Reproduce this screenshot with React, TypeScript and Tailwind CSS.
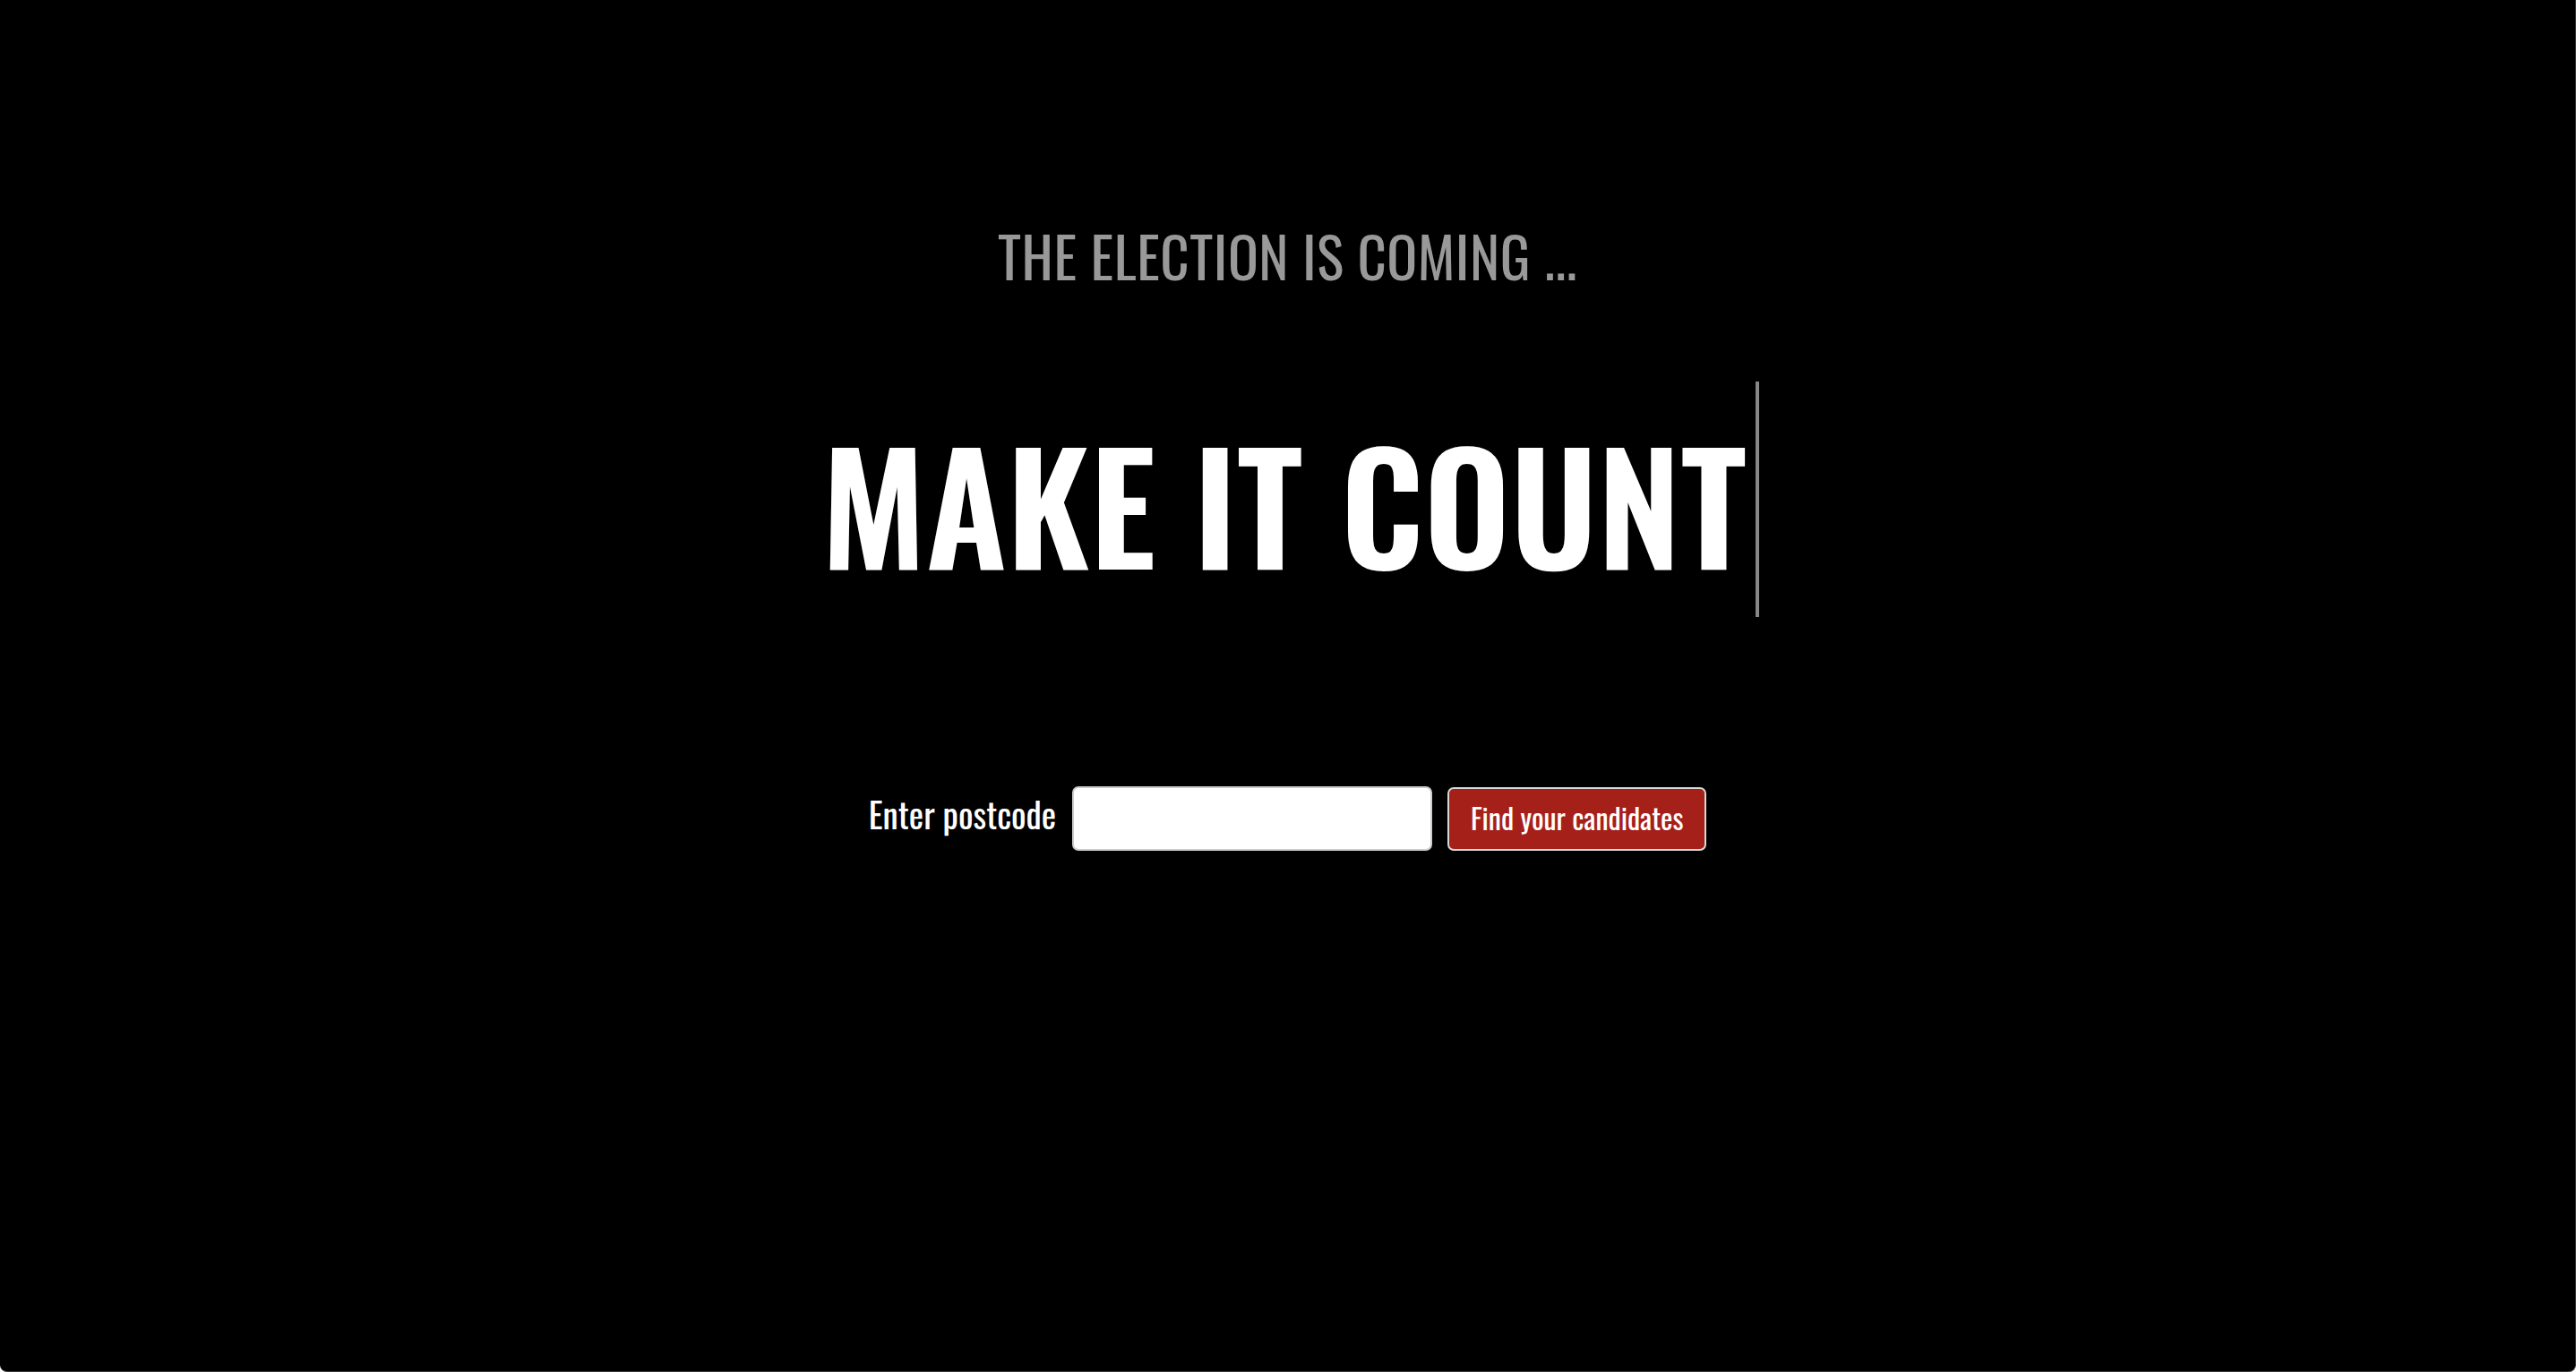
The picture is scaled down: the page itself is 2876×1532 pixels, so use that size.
import React from "react";

export default function App() {
  return (
    <div className="w-full h-[1532px] bg-black border-r border-b border-[#3a3a3a] rounded-b-[8px] overflow-hidden flex flex-col items-center font-['Oswald','Roboto_Condensed',sans-serif]">
      <div className="w-full pt-[253px] text-center whitespace-nowrap">
        <h2 className="text-[63px] leading-none font-normal tracking-[0.5px] text-[#999999]">
          THE ELECTION IS COMING ...
        </h2>
      </div>

      <div className="relative w-full mt-[161px] h-[168px] text-center whitespace-nowrap">
        <h1 className="pr-[8px] text-[168px] leading-none font-[600] text-white">
          MAKE IT COUNT
        </h1>
        <div className="absolute top-[-51px] left-[calc(50%+522px)] w-[4px] h-[263px] bg-[#888888]" />
      </div>

      <div className="mt-[233px] flex items-center">
        <label className="pb-[12px] whitespace-nowrap text-[39px] leading-none text-white">
          Enter postcode
        </label>
        <input
          type="text"
          className="ml-[18px] w-[402px] h-[72px] bg-white border-2 border-[#cccccc] rounded-[7px] outline-none"
        />
        <button className="ml-[17px] w-[289px] h-[71px] bg-[#a6201a] border-2 border-[#d9d9d9] rounded-[7px] flex items-center justify-center whitespace-nowrap">
          <span className="pb-[3px] text-[32px] leading-none text-white">
            Find your candidates
          </span>
        </button>
      </div>
    </div>
  );
}
